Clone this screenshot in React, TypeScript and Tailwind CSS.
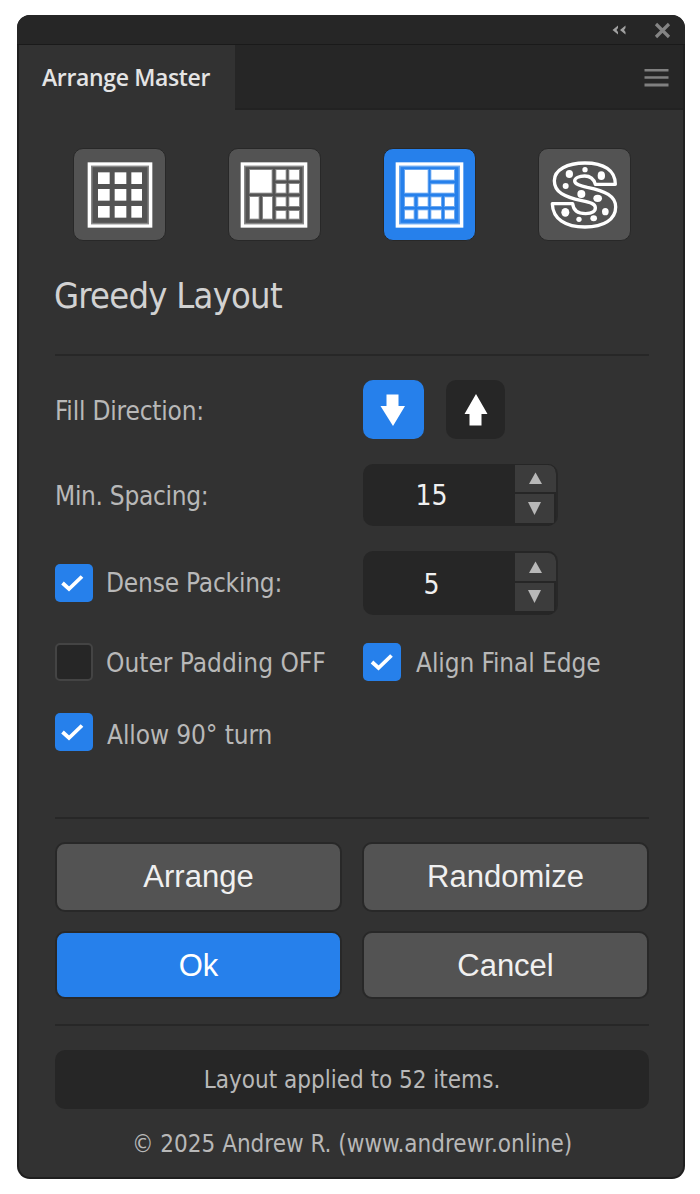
import { useState } from 'react';
import type { ReactNode } from 'react';

type Box = [number, number, number, number];

function Cells({ boxes }: { boxes: Box[] }) {
  return (
    <g fill="#fff" stroke="#fff" strokeOpacity="0.3" strokeWidth="6">
      {boxes.map(([x1, y1, x2, y2], i) => (
        <rect key={i} x={x1} y={y1} width={x2 - x1} height={y2 - y1} paintOrder="stroke" />
      ))}
    </g>
  );
}

function GridFrame({ x, w }: { x: number; w: number }) {
  return (
    <g fill="none" stroke="#fff">
      <rect x={x} y="87" width={w} height="186" strokeWidth="10" />
      <rect x={x + 7} y="94" width={w - 14} height="172" strokeWidth="5" strokeOpacity="0.3" />
    </g>
  );
}

function UniformIcon() {
  const xs: [number, number][] = [[114, 149], [164, 199], [214, 246]];
  const ys: [number, number][] = [[112, 147], [162, 197], [213, 248]];
  return (
    <svg viewBox="42 42 273 273" className="size-[91px]">
      <GridFrame x={88} w={184} />
      <g fill="#fff">
        {ys.flatMap(([y1, y2]) => xs.map(([x1, x2]) => <rect key={`${x1}-${y1}`} x={x1} y={y1} width={x2 - x1} height={y2 - y1} />))}
      </g>
    </svg>
  );
}

function MixedIcon() {
  return (
    <svg viewBox="507 42 273 273" className="size-[91px]">
      <GridFrame x={547} w={190} />
      <Cells
        boxes={[
          [570, 105, 635, 173], [570, 186, 596, 251], [609, 186, 636, 251],
          [649, 105, 677, 134], [688, 105, 717, 134], [649, 147, 677, 173], [688, 147, 717, 173],
          [649, 187, 677, 213], [688, 187, 717, 213], [649, 228, 677, 251], [688, 228, 717, 251],
        ]}
      />
    </svg>
  );
}

function GreedyIcon() {
  return (
    <svg viewBox="42 42 273 273" className="size-[91px]">
      <GridFrame x={82} w={193} />
      <Cells
        boxes={[
          [105, 105, 173, 173], [184, 105, 252, 134], [184, 148, 252, 173],
          [105, 187, 131, 213], [145, 187, 173, 213], [184, 187, 213, 213], [225, 187, 252, 213],
          [105, 226, 131, 251], [145, 226, 173, 251], [184, 226, 213, 251], [225, 226, 252, 251],
        ]}
      />
    </svg>
  );
}

function ShapeIcon() {
  const dots: [number, number, number, number][] = [
    [598, 117, 11, 12], [645, 104, 8, 8], [694, 122, 11, 13], [587, 153, 9, 9], [634, 177, 12, 12],
    [683, 190, 13, 11], [586, 232, 12, 13], [627, 253, 8, 8], [671, 250, 10, 9], [706, 230, 10, 11],
  ];
  return (
    <svg viewBox="507 42 273 273" className="size-[91px]">
      <path
        d="M736 148H676C671 130 658 123 644 123C627 123 614 129 614 138C614 148 630 152 652 157C706 168 737 183 737 216C737 253 702 276 645 276C587 276 548 252 547 206H608C610 228 624 236 647 236C667 236 677 228 676 217C675 206 662 203 635 197C584 186 553 172 553 137C553 104 592 84 645 84C702 84 736 106 736 148Z"
        fill="none" stroke="#fff" strokeWidth="10" strokeLinejoin="round"
      />
      {dots.map(([cx, cy, rx, ry]) => <ellipse key={cx} cx={cx} cy={cy} rx={rx} ry={ry} fill="#fff" />)}
    </svg>
  );
}

function ModeButton({ active, label, onClick, children }: { active: boolean; label: string; onClick: () => void; children: ReactNode }) {
  return (
    <button aria-label={label} onClick={onClick} className={`size-[93px] rounded-[10px] border border-[#282828] ${active ? 'bg-[#2680eb]' : 'bg-[#535353]'}`}>
      {children}
    </button>
  );
}

function Check({ on, label, shift, onClick }: { on: boolean; label: string; shift?: boolean; onClick: () => void }) {
  return (
    <button
      role="checkbox" aria-checked={on} aria-label={label} onClick={onClick}
      className={`size-[38px] shrink-0 rounded-[5px] ${on ? 'bg-[#2680eb]' : 'border-2 border-[#444] bg-[#262626]'}`}
    >
      {on && (
        <svg viewBox={shift ? '-1.5 0 38 38' : '0 0 38 38'} className="size-[38px]">
          <path d="M7.5 19L14 25L27 12.5" fill="none" stroke="#fff" strokeWidth="3.8" />
        </svg>
      )}
    </button>
  );
}

function Spinner({ value, onChange, tall }: { value: number; onChange: (v: number) => void; tall?: boolean }) {
  return (
    <div className={`flex w-[195px] overflow-hidden rounded-[10px] border-r-2 border-[#282828] bg-[#262626] ${tall ? 'h-[64px]' : 'h-[62px]'}`}>
      <span className={`w-[152px] pr-[15px] text-center text-[28px] text-[#f0f0f0] ${tall ? 'leading-[67px]' : 'leading-[63px]'}`}>{value}</span>
      <div className={`flex w-[41px] flex-col gap-[2px] ${tall ? 'pt-[2px]' : 'pt-px'}`}>
        <button aria-label="Increase" onClick={() => onChange(value + 1)} className={`rounded-tr-[8px] bg-[#3c3c3c] ${tall ? 'h-[28px]' : 'h-[27px]'}`}>
          <svg viewBox="0 0 41 27" className="h-[27px] w-[41px]"><path d="M20.5 7.5L27 19H14Z" fill="#b8b8b8" /></svg>
        </button>
        <button aria-label="Decrease" onClick={() => onChange(value - 1)} className={`mr-[2px] bg-[#3c3c3c] ${tall ? 'h-[28px]' : 'h-[29px]'}`}>
          <svg viewBox="0 0 39 28" className="h-[28px] w-[39px]"><path d="M19.5 20L26 7H13Z" fill="#b8b8b8" /></svg>
        </button>
      </div>
    </div>
  );
}

function ActionButton({ primary, children }: { primary?: boolean; children: ReactNode }) {
  return (
    <button className={`flex w-[287px] items-start justify-center rounded-[10px] border-2 border-[#282828] font-['Liberation_Sans',Arial,sans-serif] text-[31px] leading-[65px] ${primary ? 'bg-[#2680eb] text-white' : 'bg-[#535353] text-[#f0f0f0]'}`}>
      {children}
    </button>
  );
}

const Divider = () => <div className="h-[2px] w-full shrink-0 bg-[#272727]" />;

const modes = [
  { label: 'Uniform Grid', icon: <UniformIcon /> },
  { label: 'Mixed Grid', icon: <MixedIcon /> },
  { label: 'Greedy Layout', icon: <GreedyIcon /> },
  { label: 'Shape Fill', icon: <ShapeIcon /> },
];

export default function App() {
  const [mode, setMode] = useState(2);
  const [down, setDown] = useState(true);
  const [spacing, setSpacing] = useState(15);
  const [density, setDensity] = useState(5);
  const [dense, setDense] = useState(true);
  const [padding, setPadding] = useState(false);
  const [align, setAlign] = useState(true);
  const [turn, setTurn] = useState(true);

  return (
    <main className="flex h-[1194px] w-[700px] items-start bg-white pt-[15px] pl-[17px] font-['DejaVu_Sans_Condensed','DejaVu_Sans',Tahoma,sans-serif] text-[#b8b8b8]">
      <section className="flex h-[1164px] w-[668px] flex-col overflow-hidden rounded-[13px] bg-[#1f1f1f]">
        <header className="flex h-[30px] shrink-0 items-center justify-end border-b border-[#1a1a1a] bg-[#262626] pr-[14px]">
          <svg viewBox="0 0 14 10" className="mr-[28px] h-[10px] w-[14px]" fill="#a0a0a0">
            <path d="M6 0.5V3L4.5 5L6 7V9.5L0.5 5ZM13.5 0.5V3L12 5L13.5 7V9.5L8 5Z" />
          </svg>
          <svg viewBox="0 0 17 17" className="mt-px h-[17px] w-[17px]" fill="none" stroke="#848484" strokeWidth="3.2">
            <path d="M2 2L15 15M15 2L2 15" />
          </svg>
        </header>

        <div className="mx-[2px] mb-[2px] flex grow flex-col overflow-hidden rounded-b-[11px] bg-[#323232]">
          <nav className="flex h-[65px] shrink-0">
            <div className="w-[216px] bg-[#323232] pl-[23px] font-['Open_Sans','Noto_Sans',sans-serif] text-[23px] leading-[64px] font-semibold tracking-[-0.35px] whitespace-nowrap text-[#e4e4e4]">
              Arrange Master
            </div>
            <div className="flex grow items-start justify-end border-b-2 border-[#222] bg-[#262626] pt-[23px] pr-[14px]">
              <svg viewBox="0 0 25 20" className="h-[20px] w-[25px]" fill="#808080">
                <path d="M0.5 1h24v2.5h-24zM0.5 8.3h24v2.5h-24zM0.5 15.6h24v3h-24z" />
              </svg>
            </div>
          </nav>

          <div className="flex flex-col pt-[38px] pr-[34px] pl-[36px]">
            <div className="ml-[18px] flex gap-[62px]">
              {modes.map((m, i) => (
                <ModeButton key={m.label} label={m.label} active={mode === i} onClick={() => setMode(i)}>{m.icon}</ModeButton>
              ))}
            </div>

            <h1 className="mt-[35px] h-[39px] text-[36px] leading-[39px] tracking-[-0.75px] whitespace-nowrap text-[#d2d2d2]">
              <span className="-ml-px">Greedy Layout</span>
            </h1>
            <div className="mt-[39px]"><Divider /></div>

            <div className="mt-[24px] flex h-[59px] text-[26px] leading-[62px]">
              <span className="w-[308px] tracking-[-0.2px]">Fill Direction:</span>
              <button aria-label="Fill down" onClick={() => setDown(true)} className={`h-[59px] w-[61px] rounded-[10px] ${down ? 'bg-[#2680eb]' : 'bg-[#262626]'}`}>
                <svg viewBox="0 0 61 59" className="h-[59px] w-[61px]"><path d="M23.5 14.5H35.5V26H42L30 46L17.5 26H23.5Z" fill="#fff" /></svg>
              </button>
              <button aria-label="Fill up" onClick={() => setDown(false)} className={`ml-[22px] h-[59px] w-[59px] rounded-[10px] ${down ? 'bg-[#262626]' : 'bg-[#2680eb]'}`}>
                <svg viewBox="0 0 59 59" className="h-[59px] w-[59px]"><path d="M23.5 45.5H35.5V34H41.5L30 14L18.5 34H23.5Z" fill="#fff" /></svg>
              </button>
            </div>

            <div className="mt-[25px] flex h-[62px] text-[26px] leading-[64px]">
              <span className="w-[308px] tracking-[-0.3px]">Min. Spacing:</span>
              <Spinner value={spacing} onChange={setSpacing} />
            </div>

            <div className="mt-[25px] flex h-[64px] text-[26px] leading-[64px]">
              <div className="flex w-[308px]">
                <div className="flex items-start pt-[13px]"><Check label="Dense Packing" on={dense} onClick={() => setDense(!dense)} /></div>
                <span className="pl-[13px] tracking-[-0.2px]">Dense Packing:</span>
              </div>
              <Spinner value={density} onChange={setDensity} tall />
            </div>

            <div className="mt-[28px] flex h-[38px] text-[26px] leading-[40px] whitespace-nowrap">
              <div className="flex w-[308px]">
                <Check label="Outer Padding" on={padding} onClick={() => setPadding(!padding)} />
                <span className="pl-[13px]">Outer Padding OFF</span>
              </div>
              <Check shift label="Align Final Edge" on={align} onClick={() => setAlign(!align)} />
              <span className="pl-[15px] tracking-[-0.1px]">Align Final Edge</span>
            </div>

            <div className="mt-[32px] flex h-[38px] text-[26px] leading-[44px]">
              <Check label="Allow 90° turn" on={turn} onClick={() => setTurn(!turn)} />
              <span className="pl-[14px] tracking-[-0.1px]">Allow 90° turn</span>
            </div>

            <div className="mt-[66px]"><Divider /></div>
            <div className="mt-[23px] flex h-[70px] justify-between">
              <ActionButton>Arrange</ActionButton>
              <ActionButton>Randomize</ActionButton>
            </div>
            <div className="mt-[19px] flex h-[68px] justify-between">
              <ActionButton primary>Ok</ActionButton>
              <ActionButton>Cancel</ActionButton>
            </div>
            <div className="mt-[25px]"><Divider /></div>

            <div className="mt-[24px] h-[59px] rounded-[10px] bg-[#262626] text-center text-[24px] leading-[60px]">Layout applied to 52 items.</div>
            <p className="mt-[5px] h-[58px] text-center text-[24px] leading-[60px]">© 2025 Andrew R. (www.andrewr.online)</p>
          </div>
        </div>
      </section>
    </main>
  );
}
